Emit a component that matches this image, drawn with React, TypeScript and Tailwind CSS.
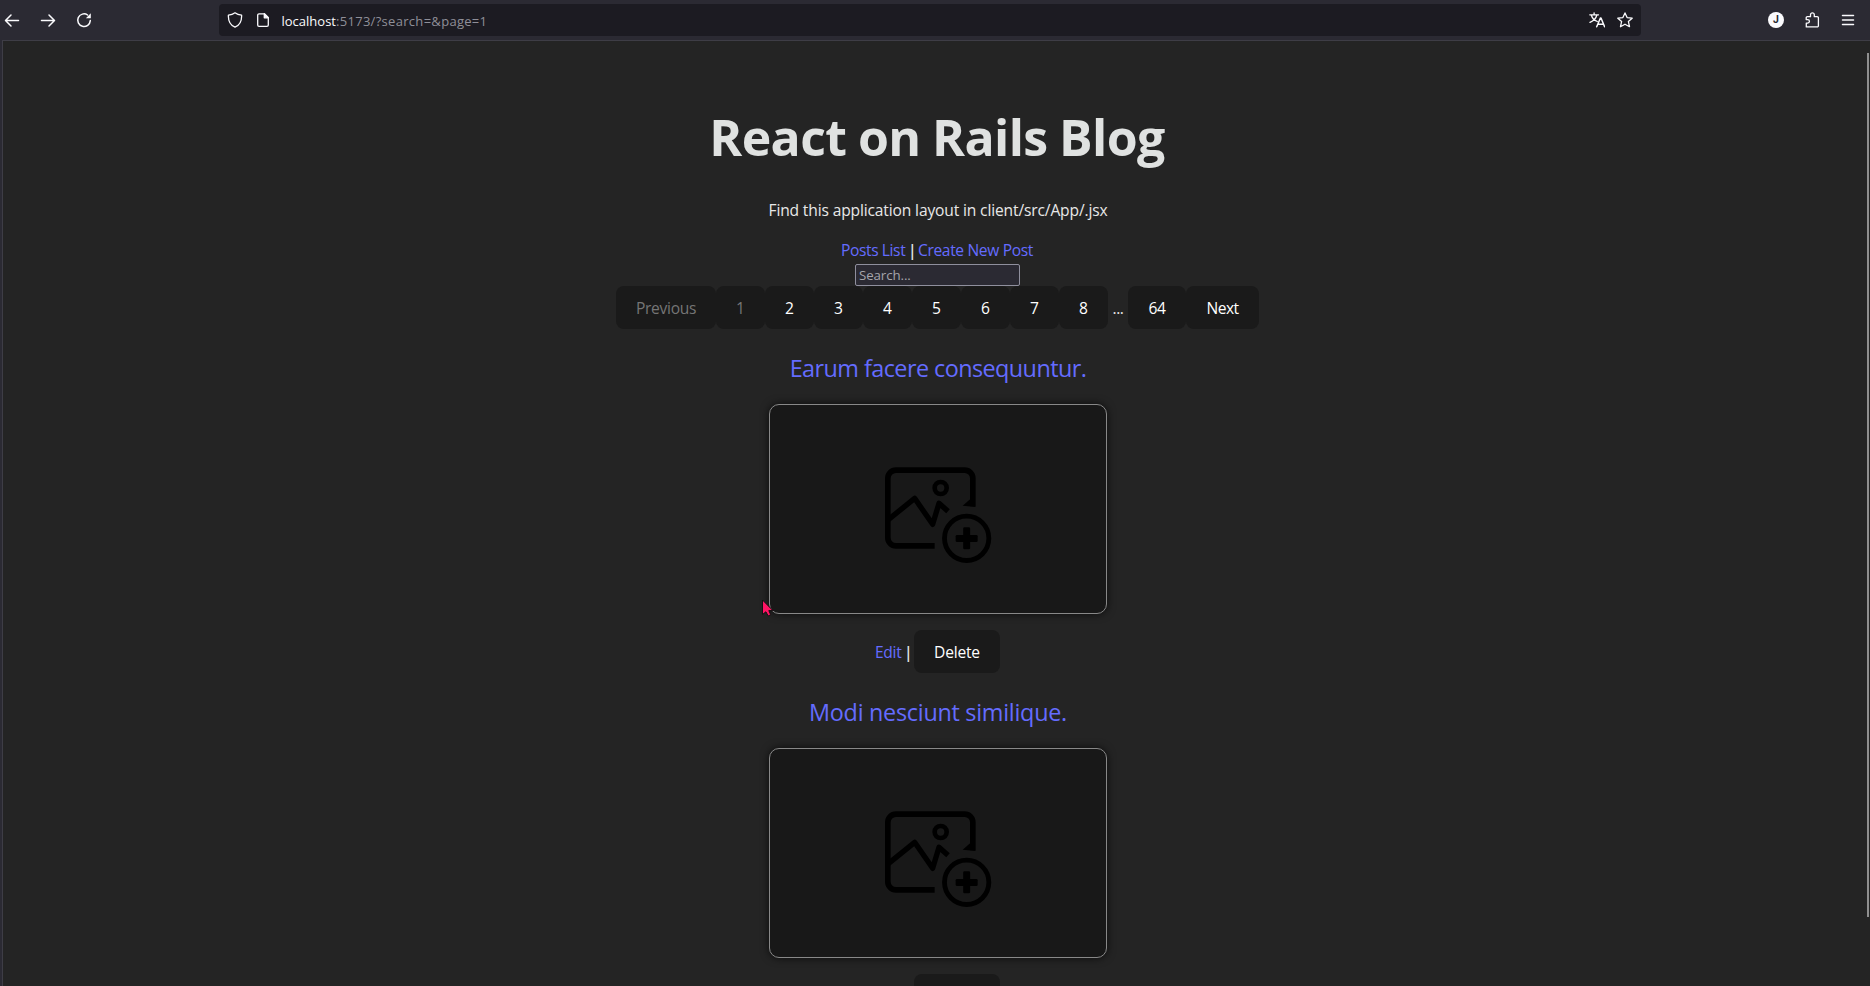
import React from 'react';

type IconProps = { children: React.ReactNode };

function Icon({ children }: IconProps) {
  return (
    <svg
      className="size-4 shrink-0 text-[#fbfbfe]"
      viewBox="0 0 16 16"
      fill="none"
      stroke="currentColor"
      strokeWidth="1.3"
      strokeLinecap="round"
      strokeLinejoin="round"
    >
      {children}
    </svg>
  );
}

function BrowserBar() {
  return (
    <header className="flex h-10 shrink-0 items-center bg-[#2b2a33]">
      <div className="flex w-[219px] shrink-0 items-center gap-5 pl-1">
        <Icon>
          <path d="M14.5 8.5H1.8M7 3 1.5 8.5 7 14" strokeWidth="1.5" />
        </Icon>
        <Icon>
          <path d="M1.5 8.5h12.7M9 3l5.5 5.5L9 14" strokeWidth="1.5" />
        </Icon>
        <Icon>
          <path d="M14.3 8.6A6.3 6.3 0 1 1 11.6 3" strokeWidth="1.5" />
          <path d="M14.8 1.3v4.9H9.9z" fill="currentColor" stroke="none" />
        </Icon>
      </div>
      <div className="flex h-8 w-[1422px] shrink-0 items-center rounded bg-[#1c1b22] px-2">
        <Icon>
          <path d="M8 .8C6 2.3 3.8 2.9 1.4 3.1c-.3 5.5 1.5 9.9 6.6 12.1 5.1-2.2 6.9-6.6 6.6-12.1C12.2 2.9 10 2.3 8 .8z" />
        </Icon>
        <div className="ml-3 flex">
          <Icon>
            <path d="M9.3 1.8H4a1.3 1.3 0 0 0-1.3 1.3v9.9A1.3 1.3 0 0 0 4 14.3h8A1.3 1.3 0 0 0 13.3 13V5.8z" />
            <path d="M9.3 1.8v4h4z" fill="currentColor" />
          </Icon>
        </div>
        <div className="ml-[10.5px] whitespace-nowrap pt-0.5 text-[13px] leading-5 text-[#8f8f98]">
          <span className="text-[#fbfbfe]">localhost</span>
          <span className="tracking-[0.3px]">:5173/?search=&amp;page=1</span>
        </div>
        <div className="ml-auto flex items-center gap-3">
          <Icon>
            <path d="M.8 2.8h8.7M5.1.8v2M2.3 3c.9 3.2 3.1 5.4 6 6.5M7.9 3C7 6.3 4.6 8.800 1 10.4" />
            <path d="M7.7 14.8 11.4 6h.6l3.6 8.8M9 12.2h5.4" strokeWidth="1.5" />
          </Icon>
          <Icon>
            <path d="m8 .9 2.1 4.7 5.1.6-3.800 3.4 1.1 5.1L8 12.2l-4.5 2.5 1.1-5.1L.8 6.2l5.1-.6z" />
          </Icon>
        </div>
      </div>
      <div className="ml-auto flex items-center gap-5 pr-3.5">
        <div className="flex size-4 items-center justify-center rounded-full bg-[#fbfbfe] font-['Roboto',sans-serif] text-[10.5px] font-bold leading-4 text-[#2b2a33]">
          J
        </div>
        <Icon>
          <path d="M2.3 14.9h10.9a1.2 1.2 0 0 0 1.2-1.2V5.9a1.2 1.2 0 0 0-1.2-1.2h-2.9V2.8a1.9 1.9 0 0 0-3.8 0v1.9H3.4a1.2 1.2 0 0 0-1.2 1.2v1.7h1.5a1.7 1.7 0 0 1 0 3.5H2.3z" />
        </Icon>
        <Icon>
          <path d="M2.5 3.5h11M2.5 8h11M2.5 12.5h11" strokeWidth="1.5" />
        </Icon>
      </div>
    </header>
  );
}

const pages = ['2', '3', '4', '5', '6', '7', '8'];

function Pager() {
  const button = 'h-[43px] shrink-0 rounded-lg bg-[#1a1a1a] text-center';
  return (
    <div className="flex h-[43px] w-[644px] items-center">
      <button className={`${button} w-[100px] tracking-[-0.3px] text-[#757575]`}>Previous</button>
      <button className={`${button} w-[49px] text-[#757575]`}>1</button>
      {pages.map((page) => (
        <button key={page} className={`${button} w-[49px] text-white`}>
          {page}
        </button>
      ))}
      <span className="w-5 text-center tracking-[-0.5px]">...</span>
      <button className={`${button} w-[58px] tracking-[-0.5px] text-white`}>64</button>
      <button className={`${button} w-[73px] tracking-[-0.5px] text-white`}>Next</button>
    </div>
  );
}

function Placeholder() {
  return (
    <svg className="h-[130px] w-[140px]" viewBox="0 0 420 390" fill="none" stroke="#000">
      <path d="M194 287.5H78a24.5 24.5 0 0 1-24.5-24.5V85A24.5 24.5 0 0 1 78 60.5h206A24.5 24.5 0 0 1 308.5 85v84" strokeWidth="17" />
      <path d="M317 171 278 167l24-21z" fill="#000" stroke="none" />
      <path d="M55 209l79-64 54 78 19-63 27 24" strokeWidth="16" strokeLinejoin="round" />
      <circle cx="212" cy="114" r="18" strokeWidth="14" />
      <circle cx="290" cy="265" r="66.5" strokeWidth="14.5" />
      <rect x="257" y="255" width="66" height="21" rx="4" fill="#000" stroke="none" />
      <rect x="279.5" y="232" width="21" height="66" rx="4" fill="#000" stroke="none" />
    </svg>
  );
}

function Post({ title, tracking }: { title: string; tracking: string }) {
  return (
    <article className="flex shrink-0 flex-col items-center">
      <h2 className={`mt-[21px] whitespace-nowrap text-[23.4px] leading-9 text-[#646cff] ${tracking}`}>{title}</h2>
      <div className="mt-[18px] h-[210px] w-[338px] rounded-[10px] border border-[#888] bg-[#181818] pl-[100px] pt-[45px] shadow-[0_0_8px_rgba(0,0,0,0.7)]">
        <Placeholder />
      </div>
      <div className="mt-4 flex h-[43px] w-[128px] items-center">
        <a className="w-[30px] pl-px tracking-[-0.33px] text-[#646cff]">Edit</a>
        <span className="w-2.5 font-semibold">|</span>
        <button className="h-[43px] w-[86px] rounded-lg bg-[#1a1a1a] text-center tracking-[-0.2px] text-white">
          Delete
        </button>
      </div>
    </article>
  );
}

export default function App() {
  return (
    <div className="relative flex h-[986px] w-[1870px] flex-col overflow-hidden bg-[#2b2a33] font-['Open_Sans',sans-serif]">
      <BrowserBar />
      <div className="ml-0.5 flex min-h-0 flex-1 overflow-hidden border-l border-t border-[#3e3d46] bg-[#242424]">
        <main className="flex flex-1 flex-col items-center pl-1.5 pt-[68px] text-[15.6px] leading-6 text-[#e8e8e8]">
          <h1 className="mr-0.5 shrink-0 whitespace-nowrap text-[50px] font-bold leading-[56px] tracking-[-0.58px] text-[#e0e2e1] [word-spacing:-1px]">
            React on Rails Blog
          </h1>
          <p className="mt-[33px] whitespace-nowrap tracking-[-0.15px]">
            Find this application layout in client/src/App/.jsx
          </p>
          <nav className="mt-4 flex w-[196px] whitespace-nowrap text-[#646cff]">
            <a className="w-[68px] pl-px tracking-[-0.4px]">Posts List</a>
            <span className="w-2.5 font-semibold text-[#e8e8e8]">|</span>
            <a className="tracking-[-0.36px]">Create New Post</a>
          </nav>
          <div className="mt-0.5 flex w-[166px]">
            <input
              className="h-[22px] w-[165px] rounded-xs border border-[#8f8f9d] bg-[#2b2a33] px-[3px] text-[13.3px] tracking-[-0.1px] placeholder:text-[#a5a5ab]"
              placeholder="Search..."
            />
          </div>
          <Pager />
          <Post title="Earum facere consequuntur." tracking="tracking-[-0.56px]" />
          <Post title="Modi nesciunt similique." tracking="tracking-[-0.28px]" />
        </main>
        <div className="w-[3px] shrink-0 pt-3">
          <div className="h-[864px] w-0.5 bg-[#8f8f8f]" />
        </div>
      </div>
      <svg className="absolute left-[761px] top-[598px] h-5 w-3.5" viewBox="0 0 14 20">
        <path d="M1.5 2v14.5l3.4-2.7 2.3 4.2 2.5-1.3-1.9-4.1h4.1z" fill="#ff1464" stroke="#111" strokeWidth="1" />
      </svg>
    </div>
  );
}
